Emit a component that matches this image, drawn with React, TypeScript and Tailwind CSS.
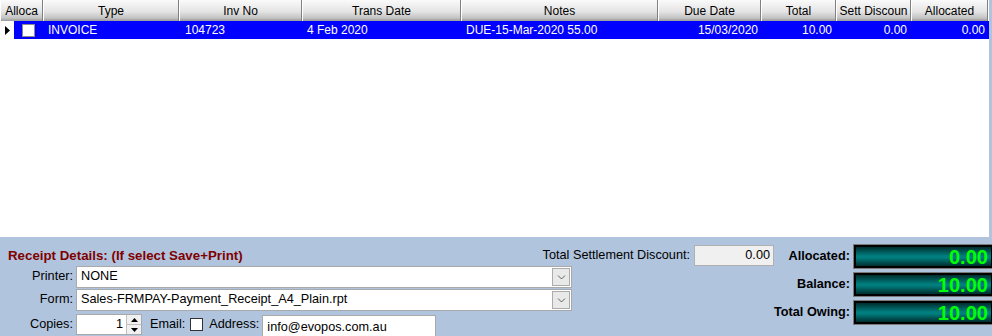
import React from 'react';

const cols = [
    { label: 'Alloca', w: 43 },
    { label: 'Type', w: 136 },
    { label: 'Inv No', w: 123 },
    { label: 'Trans Date', w: 159 },
    { label: 'Notes', w: 197 },
    { label: 'Due Date', w: 103 },
    { label: 'Total', w: 75 },
    { label: 'Sett Discoun', w: 75 },
    { label: 'Allocated', w: 77 },
];

const Chevron = () => (
    <svg width="9" height="6" viewBox="0 0 9 6"><path d="M1 1.5 L4.5 5 L8 1.5" fill="none" stroke="#606060" strokeWidth="1" /></svg>
);

const Select = ({ value }: { value: string }) => (
    <div className="w-[496px] h-[22px] bg-white border border-[#a9a9a9] flex items-center">
        <span className="flex-1 pl-[4px] text-[#000]">{value}</span>
        <div className="w-[18px] h-[18px] mr-[1px] bg-[#e9e9e9] border border-[#acacac] flex items-center justify-center"><Chevron /></div>
    </div>
);

const Lcd = ({ value }: { value: string }) => (
    <div className="w-[141px] h-[25px] shrink-0 border border-[#7a7a7a] bg-black p-[2px]">
        <div className="h-full bg-[linear-gradient(to_bottom,#002e2e,#007a7a_45%,#008080_55%,#002e2e)] flex items-center justify-end pr-[3px] text-[#00ff00] font-bold text-[20px] leading-none">{value}</div>
    </div>
);

export default function App() {
    return (
        <div className="w-[992px] h-[336px] bg-[#b0c4de] flex flex-col font-['Liberation_Sans',sans-serif] text-[12px] text-black overflow-hidden">
            <div className="w-[989px] h-[237px] bg-white shrink-0">
                <div className="flex h-[21px]">
                    {cols.map(c => (
                        <div key={c.label} style={{ width: c.w }} className="shrink-0 flex items-center justify-center border-r border-[#808080] border-l border-l-white bg-[linear-gradient(to_bottom,#fafafa,#e4e4e4_55%,#c4c4c4_85%,#9a9a9a)] whitespace-nowrap overflow-hidden">
                            {c.label}
                        </div>
                    ))}
                </div>
                <div className="flex h-[18px] text-white">
                    <div className="w-[14px] shrink-0 bg-white flex items-center justify-center">
                        <svg width="5" height="9" viewBox="0 0 5 9"><path d="M0 0 L5 4.5 L0 9 Z" fill="#000" /></svg>
                    </div>
                    <div className="flex flex-1 bg-[#0000ff] items-center">
                        <div className="w-[29px] shrink-0 flex items-center pl-[8px]">
                            <div className="w-[13px] h-[13px] bg-white border border-[#8a8a8a]" />
                        </div>
                        <div className="w-[136px] shrink-0 pl-[5px]">INVOICE</div>
                        <div className="w-[123px] shrink-0 pl-[6px]">104723</div>
                        <div className="w-[159px] shrink-0 pl-[5px]">4 Feb 2020</div>
                        <div className="w-[197px] shrink-0 pl-[5px]">DUE-15-Mar-2020 55.00</div>
                        <div className="w-[103px] shrink-0 text-right pr-[3px]">15/03/2020</div>
                        <div className="w-[75px] shrink-0 text-right pr-[4px]">10.00</div>
                        <div className="w-[75px] shrink-0 text-right pr-[4px]">0.00</div>
                        <div className="w-[77px] shrink-0 text-right pr-[3px]">0.00</div>
                    </div>
                </div>
            </div>

            <div className="flex flex-1 text-[12.7px]">
                <div className="w-[774px] shrink-0 pt-[8px] pl-[8px] flex flex-col">
                    <div className="h-[21px] flex items-center justify-between">
                        <span className="text-[#800000] font-bold text-[13.3px]">Receipt Details: (If select Save+Print)</span>
                        <div className="flex items-center gap-[4px]">
                            <span>Total Settlement Discount:</span>
                            <div className="w-[80px] h-[21px] bg-[#f0f0f0] border border-[#b0b0b0] flex items-center justify-end pr-[3px]">0.00</div>
                        </div>
                    </div>
                    <div className="flex flex-col gap-[1px] -ml-[8px]">
                        <div className="flex items-center">
                            <span className="w-[76px] text-right pr-[3px]">Printer:</span>
                            <Select value="NONE" />
                        </div>
                        <div className="flex items-center">
                            <span className="w-[76px] text-right pr-[3px]">Form:</span>
                            <Select value="Sales-FRMPAY-Payment_Receipt_A4_Plain.rpt" />
                        </div>
                        <div className="flex items-start mt-[2px]">
                            <span className="w-[76px] text-right pr-[3px] leading-[21px]">Copies:</span>
                            <div className="w-[66px] h-[21px] bg-white border border-[#a9a9a9] flex items-center">
                                <span className="flex-1 text-right pr-[3px]">1</span>
                                <div className="w-[15px] h-full flex flex-col border-l border-[#c0c0c0] bg-[#f0f0f0]">
                                    <div className="flex-1 flex items-center justify-center border-b border-[#c0c0c0]">
                                        <svg width="7" height="4" viewBox="0 0 7 4"><path d="M0 4 L3.5 0 L7 4 Z" fill="#000" /></svg>
                                    </div>
                                    <div className="flex-1 flex items-center justify-center">
                                        <svg width="7" height="4" viewBox="0 0 7 4"><path d="M0 0 L3.5 4 L7 0 Z" fill="#000" /></svg>
                                    </div>
                                </div>
                            </div>
                            <span className="ml-[8px] leading-[21px]">Email:</span>
                            <div className="ml-[5px] mt-[4px] w-[13px] h-[13px] bg-white border border-[#333]" />
                            <span className="ml-[6px] leading-[21px]">Address:</span>
                            <div className="ml-[3px] mt-[1px] w-[174px] h-[24px] bg-white border border-[#a9a9a9] pl-[4px] pt-[2px]">info@evopos.com.au</div>
                        </div>
                    </div>
                </div>

                <div className="flex-1 pt-[7px] pr-[3px] flex flex-col gap-[3px] font-bold whitespace-nowrap">
                    <div className="flex items-center justify-end gap-[3px]"><span>Allocated:</span><Lcd value="0.00" /></div>
                    <div className="flex items-center justify-end gap-[3px]"><span>Balance:</span><Lcd value="10.00" /></div>
                    <div className="flex items-center justify-end gap-[3px]"><span>Total Owing:</span><Lcd value="10.00" /></div>
                </div>
            </div>
        </div>
    );
}
